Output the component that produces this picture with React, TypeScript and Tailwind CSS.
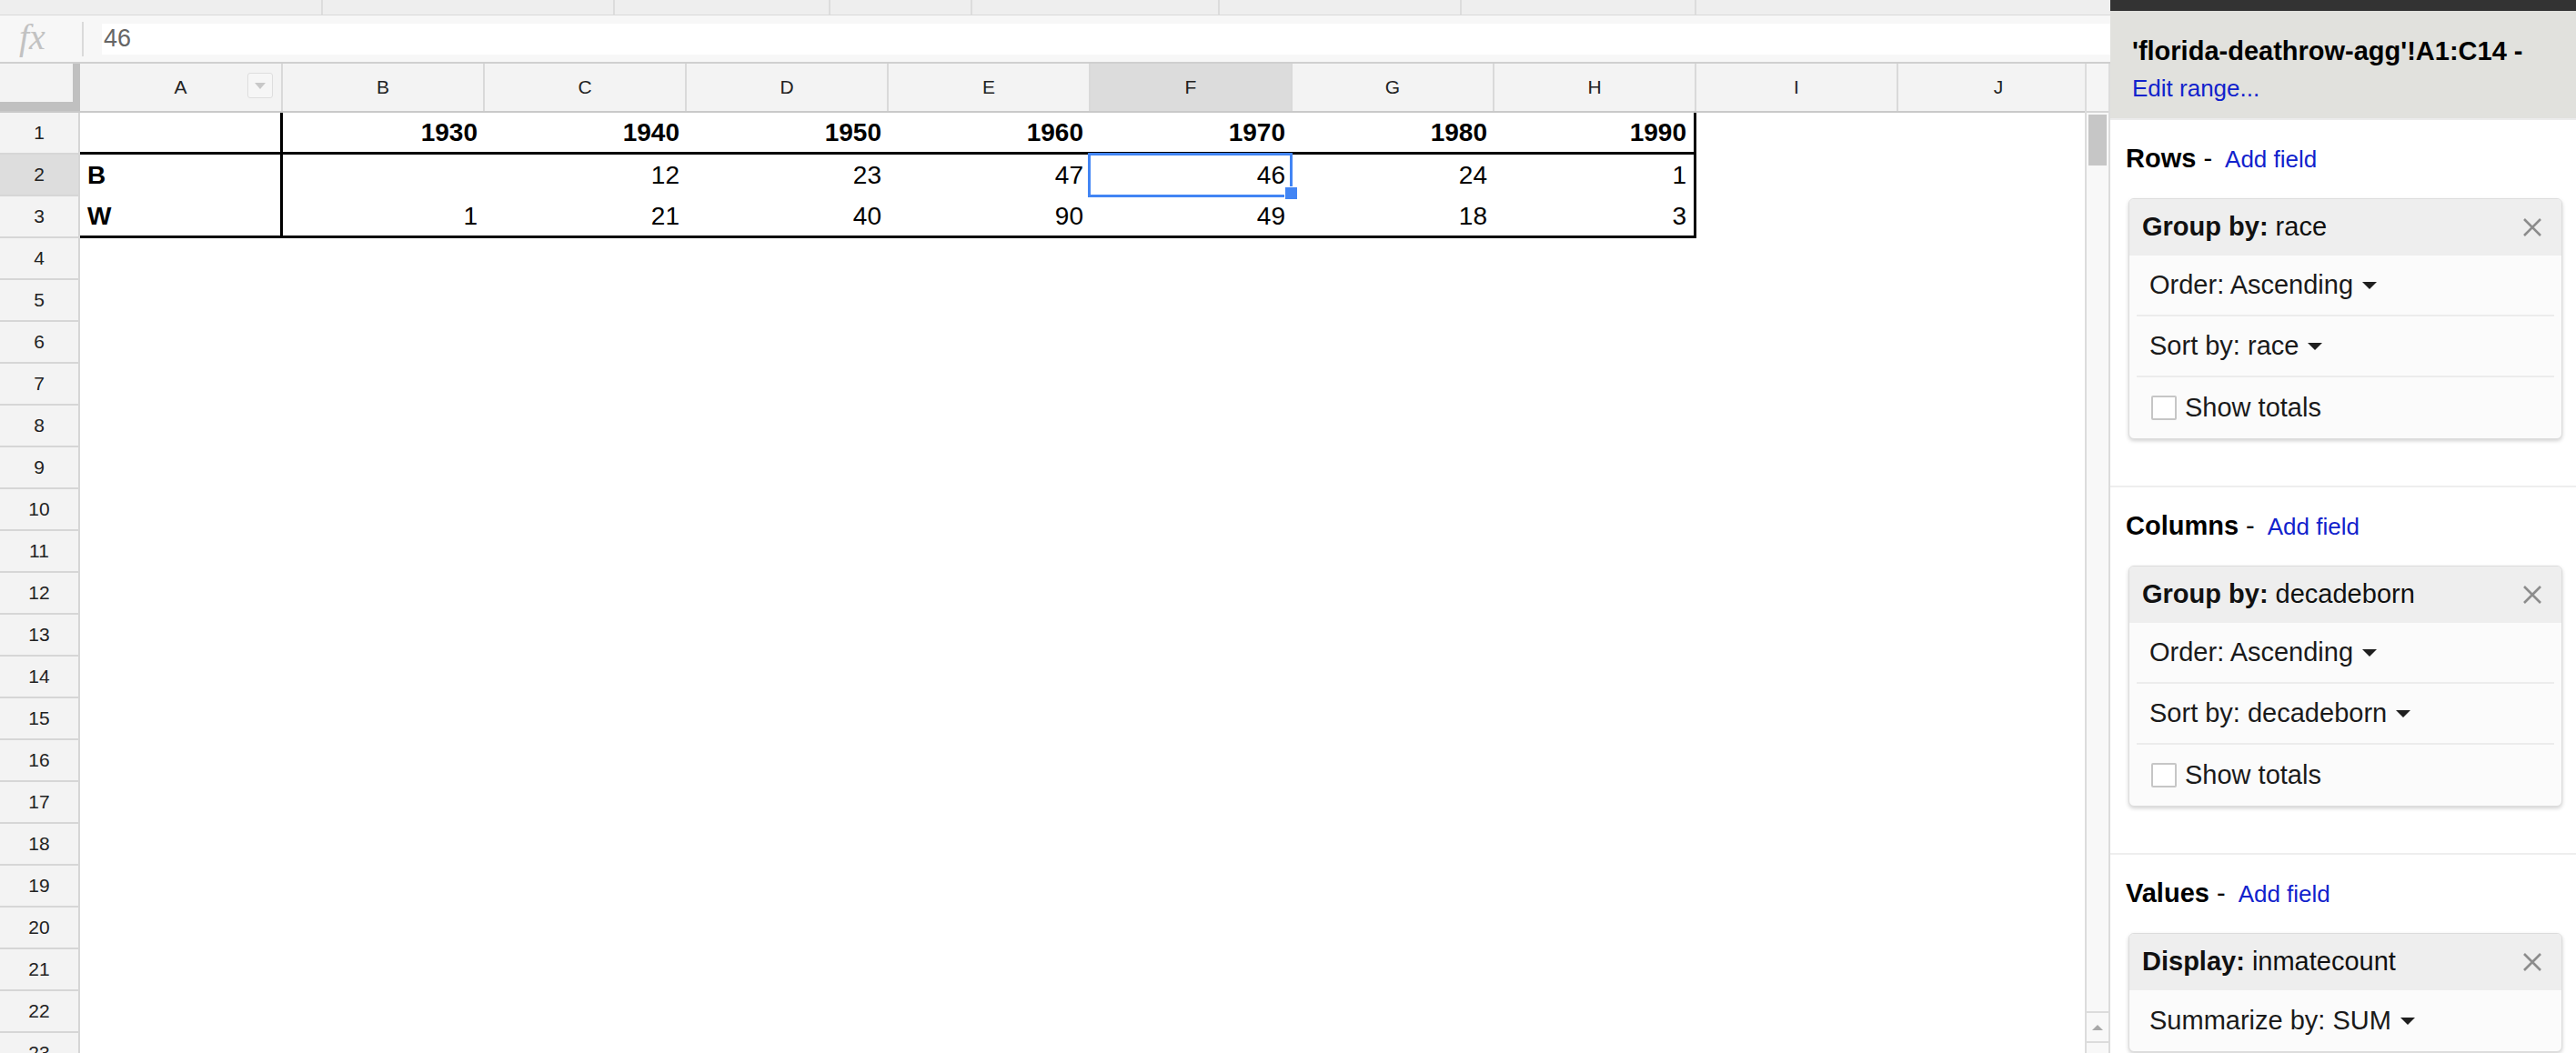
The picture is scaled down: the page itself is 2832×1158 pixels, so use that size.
import React from 'react';

const COLS = ['A', 'B', 'C', 'D', 'E', 'F', 'G', 'H', 'I', 'J'];

const data: (string | number)[][] = [
  ['', 1930, 1940, 1950, 1960, 1970, 1980, 1990],
  ['B', '', 12, 23, 47, 46, 24, 1],
  ['W', 1, 21, 40, 90, 49, 18, 3],
];

const toolbarSegments = ['w-[355px]', 'w-[321px]', 'w-[237px]', 'w-[156px]', 'w-[272px]', 'w-[266px]', 'w-[258px]'];

const colWidth = (c: number) => (c === 0 ? 'w-[223px]' : 'w-[222px]');

const Caret = () => (
  <svg width="16" height="8" viewBox="0 0 16 8" className="ml-[10px] shrink-0">
    <path d="M0 0h16L8 8z" fill="#1f1f1f" />
  </svg>
);

const CloseX = () => (
  <svg width="22" height="22" viewBox="0 0 22 22" className="shrink-0">
    <path d="M2 2L20 20M20 2L2 20" stroke="#8c8c8c" strokeWidth="2.6" />
  </svg>
);

function Cell({ r, c }: { r: number; c: number }) {
  const v = r < 3 && c < 8 ? data[r][c] : '';
  const cls = ['relative shrink-0 h-full flex items-center text-[28px] text-black', colWidth(c)];
  if (c === 0) cls.push('justify-start pl-[8px] font-bold');
  else cls.push('justify-end pr-[8px]');
  if (r === 0) cls.push('font-bold');
  if (r < 3 && (c === 0 || c === 7)) cls.push('border-r-[3px] border-r-black');
  if ((r === 0 || r === 2) && c < 8) cls.push('border-b-[3px] border-b-black');
  const selected = r === 1 && c === 5;
  return (
    <div className={cls.join(' ')}>
      {v}
      {selected && (
        <>
          <div className="absolute -left-[3px] -top-[2px] right-0 -bottom-[1px] border-[3px] border-[#4285f4]" />
          <div className="absolute -right-[6px] -bottom-[4px] w-[15px] h-[15px] bg-[#4285f4] border border-white" />
        </>
      )}
    </div>
  );
}

function FieldCard({ label, value, items }: { label: string; value: string; items: { text: string; type: 'select' | 'check' }[] }) {
  return (
    <div className="ml-[20px] mr-[15px] mt-[29px] rounded-[6px] border border-[#dcdcdc] bg-[#fbfbfb] shadow-[0_2px_4px_rgba(0,0,0,0.18)] overflow-hidden">
      <div className="h-[62px] bg-[#eeeeee] flex items-center justify-between pl-[14px] pr-[21px] text-[29px] text-[#111]">
        <span>
          <b>{label}</b> {value}
        </span>
        <CloseX />
      </div>
      {items.map((it, i) => (
        <div key={i} className={`mx-[8px] h-[67px] flex items-center pl-[14px] text-[29px] text-[#1a1a1a] ${i < items.length - 1 ? 'border-b-2 border-[#ececec]' : ''}`}>
          {it.type === 'check' ? (
            <>
              <div className="ml-[2px] w-[28px] h-[27px] border-2 border-[#c6c6c6] rounded-[2px] bg-white" />
              <span className="ml-[9px]">{it.text}</span>
            </>
          ) : (
            <>
              <span>{it.text}</span>
              <Caret />
            </>
          )}
        </div>
      ))}
    </div>
  );
}

function Section({ title, children, last }: { title: string; children: React.ReactNode; last?: boolean }) {
  return (
    <div className={`pt-[27px] pb-[51px] ${last ? '' : 'border-b-2 border-[#eeeeee]'}`}>
      <div className="pl-[17px] h-[30px] leading-[30px] text-[29px] text-black whitespace-nowrap">
        <b>{title}</b> -<span className="ml-[14px] text-[26px] text-[#1122cc]">Add field</span>
      </div>
      {children}
    </div>
  );
}

export default function App() {
  const rows = Array.from({ length: 23 }, (_, i) => i);
  return (
    <div className="w-[2832px] h-[1158px] overflow-hidden flex bg-white font-['Liberation_Sans',Arial,sans-serif]">
      {/* spreadsheet side */}
      <div className="w-[2320px] shrink-0 flex flex-col">
        <div className="h-[17px] shrink-0 flex bg-[#eeeeee] border-b border-[#d9d9d9]">
          {toolbarSegments.map((w, i) => (
            <div key={i} className={`${w} shrink-0 h-full border-r-2 border-[#dcdcdc]`} />
          ))}
        </div>
        <div className="h-[53px] shrink-0 flex items-center bg-[#f7f7f7] border-b-2 border-[#cfcfcf]">
          <div className="w-[90px] shrink-0 pl-[21px] text-[40px] leading-none italic text-[#c2c2c2] font-['Liberation_Serif',serif] -mt-[4px]">
            fx
          </div>
          <div className="w-[2px] h-[38px] bg-[#dadada] shrink-0" />
          <div className="ml-[20px] flex-1 h-[34px] bg-white flex items-center pl-[2px] text-[27px] text-[#666]">46</div>
        </div>
        <div className="flex-1 flex overflow-hidden">
          <div className="w-[2292px] shrink-0 overflow-hidden">
            <div className="h-[54px] flex bg-[#f3f3f3] border-b-2 border-[#c9c9c9]">
              <div className="w-[88px] shrink-0 h-full bg-[#c0c0c0]">
                <div className="w-[80px] h-[42px] bg-[#f3f3f3]" />
              </div>
              {COLS.map((l, c) => (
                <div
                  key={l}
                  className={`relative shrink-0 h-full flex items-center justify-center border-r-2 border-[#d9d9d9] text-[21px] text-[#222] ${colWidth(c)} ${c === 5 ? 'bg-[#dcdcdc]' : ''}`}
                >
                  {l}
                  {c === 0 && (
                    <div className="absolute right-[9px] top-[10px] w-[28px] h-[28px] border border-[#dedede] rounded-[3px] bg-[#f6f6f6] flex items-center justify-center">
                      <svg width="12" height="7" viewBox="0 0 12 7">
                        <path d="M0 0h12L6 7z" fill="#c8c8c8" />
                      </svg>
                    </div>
                  )}
                </div>
              ))}
            </div>
            {rows.map((r) => (
              <div key={r} className="h-[46px] flex">
                <div
                  className={`w-[88px] shrink-0 h-full flex items-center justify-center border-r-2 border-b-2 border-[#d6d6d6] text-[21px] text-[#222] ${r === 1 ? 'bg-[#dddddd]' : 'bg-[#f3f3f3]'}`}
                >
                  {r + 1}
                </div>
                {COLS.map((_, c) => (
                  <Cell key={c} r={r} c={c} />
                ))}
              </div>
            ))}
          </div>
          {/* vertical scrollbar */}
          <div className="w-[28px] shrink-0 flex flex-col border-l-2 border-r-2 border-[#dcdcdc] bg-[#f8f8f8]">
            <div className="h-[54px] shrink-0 bg-[#f5f5f5] border-b-2 border-[#d6d6d6]" />
            <div className="h-[988px] shrink-0 pt-[2px] pl-[2px]">
              <div className="w-[20px] h-[56px] bg-[#c6c6c6]" />
            </div>
            <div className="h-[33px] shrink-0 border-t-2 border-[#dcdcdc] flex items-center justify-center">
              <svg width="12" height="6" viewBox="0 0 12 6">
                <path d="M0 6h12L6 0z" fill="#a8a8a8" />
              </svg>
            </div>
            <div className="h-[33px] shrink-0 border-t-2 border-[#dcdcdc]" />
          </div>
        </div>
      </div>

      {/* pivot table editor */}
      <div className="w-[512px] shrink-0 flex flex-col bg-white">
        <div className="h-[12px] shrink-0 bg-[#333333]" />
        <div className="h-[120px] shrink-0 bg-[#e1e1dd] border-b-2 border-[#ececec] pl-[24px] pt-[28px]">
          <div className="text-[29px] leading-[32px] font-bold text-black whitespace-nowrap">'florida-deathrow-agg'!A1:C14 -</div>
          <div className="mt-[9px] text-[26px] leading-[32px] text-[#1122cc]">Edit range...</div>
        </div>
        <Section title="Rows">
          <FieldCard
            label="Group by:"
            value="race"
            items={[
              { text: 'Order: Ascending', type: 'select' },
              { text: 'Sort by: race', type: 'select' },
              { text: 'Show totals', type: 'check' },
            ]}
          />
        </Section>
        <Section title="Columns">
          <FieldCard
            label="Group by:"
            value="decadeborn"
            items={[
              { text: 'Order: Ascending', type: 'select' },
              { text: 'Sort by: decadeborn', type: 'select' },
              { text: 'Show totals', type: 'check' },
            ]}
          />
        </Section>
        <Section title="Values" last>
          <FieldCard label="Display:" value="inmatecount" items={[{ text: 'Summarize by: SUM', type: 'select' }]} />
        </Section>
      </div>
    </div>
  );
}
